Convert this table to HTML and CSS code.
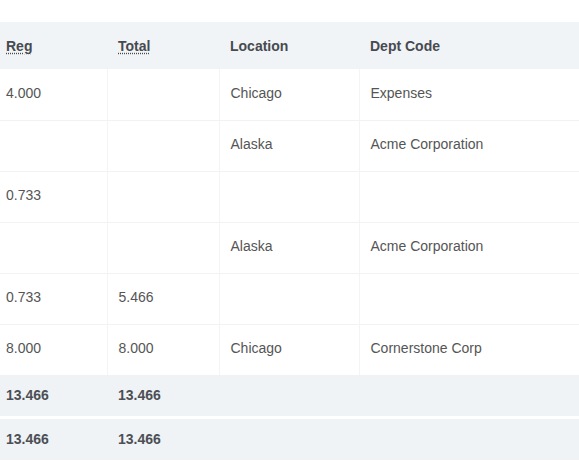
FILE: index.html
```html
<!DOCTYPE html>
<html>
<head>
<meta charset="utf-8">
<link rel="stylesheet" href="styles.css">
</head>
<body>
<div class="wrap">
<table class="grid">
  <colgroup>
    <col class="c1"><col class="c2"><col class="c3"><col class="c4">
  </colgroup>
  <thead>
    <tr>
      <th><abbr title="Regular">Reg</abbr></th>
      <th><abbr title="Total">Total</abbr></th>
      <th>Location</th>
      <th>Dept Code</th>
    </tr>
  </thead>
  <tbody>
    <tr><td>4.000</td><td></td><td>Chicago</td><td>Expenses</td></tr>
    <tr><td></td><td></td><td>Alaska</td><td>Acme Corporation</td></tr>
    <tr><td>0.733</td><td></td><td></td><td></td></tr>
    <tr><td></td><td></td><td>Alaska</td><td>Acme Corporation</td></tr>
    <tr><td>0.733</td><td>5.466</td><td></td><td></td></tr>
    <tr><td>8.000</td><td>8.000</td><td>Chicago</td><td>Cornerstone Corp</td></tr>
  </tbody>
  <tfoot>
    <tr><td>13.466</td><td>13.466</td><td></td><td></td></tr>
    <tr><td>13.466</td><td>13.466</td><td></td><td></td></tr>
  </tfoot>
</table>
</div>
</body>
</html>
```
FILE: styles.css
```css
html, body { margin: 0; padding: 0; background: #fff; }
body { font-family: "Liberation Sans", Arial, sans-serif; font-size: 14px; color: #555; }
.wrap { padding-top: 22px; overflow: hidden; width: 579px; }
.grid { border-collapse: collapse; table-layout: fixed; width: 579px; }
.c1 { width: 107px; }
.c2 { width: 112px; }
.c3 { width: 140px; }
.c4 { width: 220px; }
.grid th, .grid td { text-align: left; padding: 0 0 0 11px; vertical-align: middle; }
.grid th:first-child, .grid td:first-child { padding-left: 6px; }
.grid thead th { background: #f1f4f7; height: 47px; font-weight: bold; color: #474a4f; }
abbr { text-decoration: underline dotted; text-underline-offset: 2px; }
.grid tbody td { height: 46px; padding-bottom: 4px; border-top: 1px solid #f1f2f4; border-left: 1px solid #f3f4f6; }
.grid tbody tr:first-child td { border-top: none; height: 47px; }
.grid tbody td:first-child { border-left: none; }
.grid tfoot td { background: #f0f3f6; font-weight: bold; color: #4c4f54; height: 39px; padding-bottom: 2px; border-top: 3px solid #fff; }
.grid tfoot tr:first-child td { border-top: none; }
```
